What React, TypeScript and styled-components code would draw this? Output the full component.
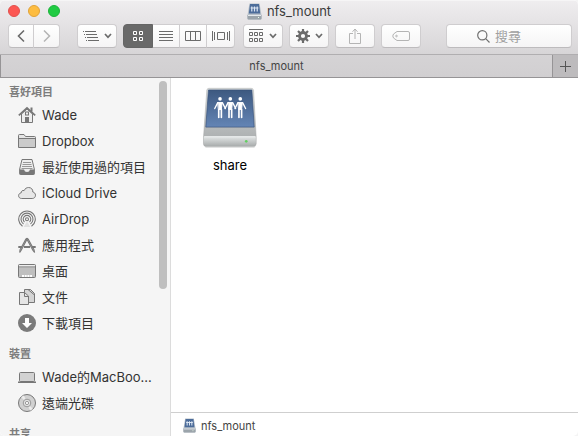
import React from "react";
import styled, { createGlobalStyle, css } from "styled-components";

const GlobalStyle = createGlobalStyle`
  * { box-sizing: border-box; }
  body {
    margin: 0;
    background: #f4f4f4;
    font-family: Inter, "Noto Sans CJK TC", sans-serif;
    font-size: 13px;
    color: #333;
  }
  button, input { font: inherit; color: inherit; }
  svg { display: block; flex: none; }
`;

const Window = styled.div`
  display: flex;
  flex-direction: column;
  height: 100vh;
  overflow: hidden;
  border-radius: 5px;
  background: #fff;
`;

const Chrome = styled.header`
  flex: none;
  height: 55px;
  background: linear-gradient(#efedef, #d7d5d7);
  border-top: 1px solid #f6f5f6;
  border-bottom: 1px solid #b0aeb0;
`;

const TitleBar = styled.div`
  display: grid;
  grid-template-columns: 1fr auto 1fr;
  align-items: center;
  height: 20px;
  padding: 0 8px;
`;

const Lights = styled.div`
  display: flex;
  gap: 8px;
`;

const Light = styled.button<{ $fill: string; $edge: string }>`
  width: 12px;
  height: 12px;
  padding: 0;
  border-radius: 50%;
  background: ${(p) => p.$fill};
  border: 1px solid ${(p) => p.$edge};
`;

const Title = styled.h1`
  display: flex;
  align-items: center;
  gap: 5px;
  margin: 0;
  font-size: 13px;
  font-weight: 400;
  line-height: 20px;
  color: #3c3c3c;
`;

const Toolbar = styled.div`
  display: flex;
  align-items: center;
  gap: 6px;
  padding: 3px 6px 0 8px;
`;

const Group = styled.div<{ $after: number }>`
  display: flex;
  margin-right: ${(p) => p.$after}px;
`;

const control = css`
  height: 24px;
  background: linear-gradient(#fff, #f5f4f5);
  border: 1px solid #cfcdcf;
  border-bottom-color: #bdbbbd;
  border-radius: 4px;
`;

const ToolButton = styled.button<{ $width: number; $active?: boolean; $join?: "start" | "middle" | "end" }>`
  ${control}
  display: flex;
  align-items: center;
  justify-content: center;
  gap: 5px;
  flex: none;
  width: ${(p) => p.$width}px;
  padding: 0;
  color: #6b6b6b;
  &:disabled { color: #b4b4b4; }
  ${(p) => p.$join === "start" && css`border-radius: 4px 0 0 4px;`}
  ${(p) => p.$join === "middle" && css`border-radius: 0; border-left-width: 0;`}
  ${(p) => p.$join === "end" && css`border-radius: 0 4px 4px 0; border-left-width: 0;`}
  ${(p) => p.$active && css`background: #696969; border-color: #656565; color: #fff;`}
`;

const Search = styled.label`
  ${control}
  display: flex;
  align-items: center;
  gap: 5px;
  width: 126px;
  margin-left: auto;
  padding-left: 30px;
  color: #707070;
`;

const SearchInput = styled.input`
  flex: 1;
  min-width: 0;
  height: 20px;
  padding: 0;
  border: 0;
  outline: 0;
  background: none;
  line-height: 20px;
  &::placeholder { color: #a0a0a0; opacity: 1; }
`;

const TabBar = styled.div`
  display: flex;
  flex: none;
  height: 23px;
  border-bottom: 1px solid #969496;
  border-left: 1px solid #969496;
`;

const Tab = styled.button`
  flex: 1;
  padding: 0;
  border: 0;
  background: linear-gradient(#d5d3d5, #d1cfd1);
  color: #444;
  font-size: 11px;
`;

const AddTab = styled.button`
  display: grid;
  place-items: center;
  width: 26px;
  padding: 0;
  border: 0;
  border-left: 1px solid #969496;
  background: #bdbbbd;
  color: #555;
`;

const Body = styled.div`
  display: flex;
  flex: 1;
  min-height: 0;
`;

const Sidebar = styled.nav`
  position: relative;
  flex: none;
  width: 171px;
  overflow: hidden;
  background: #f5f5f5;
  border-right: 1px solid #dcdcdc;
`;

const Section = styled.section`
  & + & { margin-top: 4px; }
`;

const SectionTitle = styled.h2`
  height: 24px;
  margin: 0;
  padding: 2px 0 0 9px;
  font-size: 11px;
  font-weight: 700;
  line-height: 24px;
  color: #7d7d7d;
`;

const List = styled.ul`
  margin: 0;
  padding: 0;
  list-style: none;
`;

const Place = styled.a`
  display: flex;
  align-items: center;
  gap: 6px;
  height: 26px;
  padding: 0 18px;
  line-height: 26px;
  color: #333;
  text-decoration: none;
  white-space: nowrap;
`;

const ScrollThumb = styled.div`
  position: absolute;
  top: 3px;
  right: 3px;
  width: 8px;
  height: 58%;
  border-radius: 4px;
  background: #bfbfbf;
`;

const Main = styled.main`
  display: flex;
  flex-direction: column;
  flex: 1;
  min-width: 0;
`;

const Files = styled.div`
  display: flex;
  flex-wrap: wrap;
  align-content: flex-start;
  flex: 1;
  padding-top: 9px;
`;

const FileItem = styled.a`
  display: flex;
  flex-direction: column;
  align-items: center;
  gap: 8px;
  width: 118px;
  line-height: 18px;
  color: #000;
  text-decoration: none;
`;

const PathBar = styled.footer`
  display: flex;
  align-items: center;
  gap: 5px;
  flex: none;
  height: 24px;
  padding: 2px 12px 0;
  border-top: 1px solid #cfcfcf;
  font-size: 11px;
  color: #444;
`;

const ShareDrive = () => (
  <svg width="56" height="61" viewBox="36 24 168 184" aria-hidden="true">
    <defs>
      <linearGradient id="shell" x2="0" y2="1"><stop stopColor="#d8dcdc" /><stop offset="1" stopColor="#a6a9aa" /></linearGradient>
      <linearGradient id="face" x2="0" y2="1"><stop stopColor="#e2e5e5" /><stop offset="1" stopColor="#a9adad" /></linearGradient>
      <linearGradient id="panel" x2="0" y2="1"><stop stopColor="#3d5980" /><stop offset="1" stopColor="#6485b5" /></linearGradient>
    </defs>
    <rect x="44" y="198" width="152" height="9" rx="4" fill="#d9dada" />
    <path d="M56 28H184Q190 28 191 34L199 176V195Q199 203 191 203H48Q40 203 40 195V176L50 34Q51 28 56 28Z" fill="url(#shell)" stroke="#a9adad" strokeWidth="1.5" />
    <path d="M55 33H186L193 145H47Z" fill="url(#panel)" stroke="#36517a" strokeWidth="2" />
    <path d="M41 174H198V193Q198 202 190 202H49Q41 202 41 193Z" fill="url(#face)" />
    <path d="M42 174H197" stroke="#f1f3f3" strokeWidth="3" />
    <circle cx="169" cy="188" r="4" fill="#63cf62" />
    {[90, 121, 151].map((x) => (
      <g key={x} fill="#fff" stroke="#fff" strokeLinecap="round" strokeLinejoin="round">
        <circle cx={x} cy="60" r="5.5" stroke="none" />
        <path d={`M${x - 6} 71H${x + 6}L${x + 4} 92H${x - 4}Z`} strokeWidth="3" />
        <path d={`M${x - 7} 71L${x - 16} 89M${x + 7} 71L${x + 16} 89`} strokeWidth="4" />
        <path d={`M${x - 4} 92V116M${x + 4} 92V116`} strokeWidth="5" />
      </g>
    ))}
  </svg>
);

const SmallDrive = ({ size }: { size: number }) => (
  <svg width={size} height={size + 2} viewBox="0 0 15 17" aria-hidden="true">
    <path d="M2.5.5H12.5L14.5 12V15.5Q14.5 16.5 13.5 16.5H1.5Q.5 16.5.5 15.5V12Z" fill="#b6bfc8" />
    <path d="M3 1H12L13.2 10.5H1.8Z" fill="#4c6c9a" />
    <path d="M4.8 3.5V8.5M7.5 3.5V8.5M10.2 3.5V8.5M3.6 5H11.4" stroke="#dce6f3" strokeWidth="1.2" />
    <path d="M.5 12H14.5V15.5Q14.5 16.5 13.5 16.5H1.5Q.5 16.5.5 15.5Z" fill="#9ba4ab" />
    <path d="M1 12.5H14" stroke="#e4e9ed" />
    <path d="M11 14.5h1" stroke="#eaffea" />
  </svg>
);

const Line = ({ w, h, children, width = 1 }: { w: number; h: number; width?: number; children: React.ReactNode }) => (
  <svg width={w} height={h} viewBox={`0 0 ${w} ${h}`} fill="none" stroke="currentColor" strokeWidth={width} aria-hidden="true">
    {children}
  </svg>
);

const Caret = () => <Line w={8} h={6} width={1.7}><path d="M1 1L4 4.3L7 1" /></Line>;

const gray = "#777";
const fillGray = "#cbcbcb";

const placeIcons: Record<string, React.ReactNode> = {
  home: (
    <>
      <path d="M3.5 8V16.5H14.5V8L9 3Z" fill="#eee" stroke={gray} />
      <path d="M.8 9.3L9 1.8L17.2 9.3" stroke={gray} strokeWidth="1.7" />
      <path d="M13.5 1.5V5.5" stroke={gray} strokeWidth="2" />
      <rect x="7.5" y="6" width="3" height="3" stroke={gray} />
      <path d="M7 11H11V17H7Z" fill={gray} />
    </>
  ),
  folder: (
    <>
      <path d="M.5 15.5V3.5Q.5 2.5 1.5 2.5H6L7.5 4.5H16.5Q17.5 4.5 17.5 5.5V15.5Z" fill="#e4e4e4" stroke={gray} />
      <path d="M1 7H17V15H1Z" fill={fillGray} />
      <path d="M1 6.5H17" stroke={gray} />
    </>
  ),
  recent: (
    <>
      <path d="M4 1.5H14L16.3 11V15.5Q16.3 16.5 15.3 16.5H2.7Q1.7 16.5 1.7 15.5V11Z" fill="#eee" stroke={gray} />
      <path d="M5 4.5H13M4.5 6.5H13.5M4 8.5H14M3.5 10.5H14.5" stroke="#999" />
      <path d="M1.5 11.5H6Q6.5 14 9 14T12 11.5H16.5V16.5H1.5Z" fill={gray} />
    </>
  ),
  cloud: <path d="M3.7 14.5C1.6 14.5.6 13.2.6 11.7C.6 10 1.9 9 3.1 9C2.9 7.2 4.6 6 6.1 6.6C7 4.5 8.7 3.5 10.6 3.5C13.2 3.5 15 5.4 14.8 8C16.4 8.3 17.5 9.6 17.5 11.2C17.5 13.2 16.1 14.5 14.2 14.5Z" fill="#e7e7e7" stroke={gray} />,
  airdrop: (
    <g stroke={gray} strokeWidth="1.1">
      <path d="M4.5 16.2A8.3 8.3 0 1 1 13.5 16.2" />
      <path d="M5.5 14A6 6 0 1 1 12.5 14" />
      <path d="M6.5 12A3.8 3.8 0 1 1 11.5 12" />
      <circle cx="9" cy="9.3" r="1.5" />
      <path d="M9 11.5L5.6 17H12.4Z" fill="#e0e0e0" stroke="none" />
    </g>
  ),
  apps: (
    <g stroke={gray}>
      <path d="M9.7 2L3.2 14.2L1.7 16.5L2 13.8L8 2.7" strokeWidth="1.1" />
      <path d="M8.2 2L15 14.5L16.6 16.5L16 13.8L10 2.7" strokeWidth="1.1" />
      <path d="M.3 11H4M6 11H12M14 11H17.7" strokeWidth="2" />
    </g>
  ),
  desktop: (
    <>
      <rect x=".5" y="2.5" width="17" height="13" rx="1" fill="#bfbfbf" stroke={gray} />
      <path d="M1 3.5H17" stroke="#eee" />
      <path d="M1 5H17" stroke="#999" />
      <path d="M4 14H14" stroke="#fff" strokeWidth="2" strokeDasharray="2 .7" />
    </>
  ),
  docs: (
    <>
      <path d="M6.5 1.5H12.5L16.5 5.5V14.5H6.5Z" fill="#d5d5d5" stroke={gray} />
      <path d="M10 1.5L16.5 7" stroke={gray} />
      <path d="M1.5 4.5H6.5L10.5 8V16.5H1.5Z" fill="#e5e5e5" stroke={gray} />
      <path d="M6.5 4.5V8.5H10.5" stroke={gray} />
    </>
  ),
  downloads: (
    <>
      <circle cx="9" cy="9" r="9" fill="#7b7b7b" />
      <path d="M7 4H11V9H14L9 14L4 9H7Z" fill="#fff" />
    </>
  ),
  laptop: (
    <>
      <rect x="1.5" y="4.5" width="15" height="9" rx="1" fill="#d2d2d2" stroke={gray} />
      <path d="M0 14.3H18" stroke={gray} strokeWidth="1.5" />
    </>
  ),
  disc: (
    <>
      <circle cx="9" cy="9" r="8.5" fill="#d0d0d0" stroke={gray} />
      <path d="M9 9L3 3L6 1.4ZM9 9L15 15L12 16.6Z" fill="#ececec" />
      <circle cx="9" cy="9" r="3.8" fill="#e2e2e2" stroke="#999" />
      <circle cx="9" cy="9" r="1.6" fill="#fff" stroke="#999" />
    </>
  ),
};

const sections = [
  {
    title: "喜好項目",
    places: [
      ["home", "Wade"],
      ["folder", "Dropbox"],
      ["recent", "最近使用過的項目"],
      ["cloud", "iCloud Drive"],
      ["airdrop", "AirDrop"],
      ["apps", "應用程式"],
      ["desktop", "桌面"],
      ["docs", "文件"],
      ["downloads", "下載項目"],
    ],
  },
  { title: "裝置", places: [["laptop", "Wade的MacBoo..."], ["disc", "遠端光碟"]] },
  { title: "共享", places: [] },
];

export default function App() {
  return (
    <Window>
      <GlobalStyle />
      <Chrome>
        <TitleBar>
          <Lights>
            <Light $fill="#fc5753" $edge="#e1504d" aria-label="Close" />
            <Light $fill="#fdbc40" $edge="#e0a238" aria-label="Minimize" />
            <Light $fill="#20cb43" $edge="#1cb33b" aria-label="Zoom" />
          </Lights>
          <Title><SmallDrive size={15} />nfs_mount</Title>
        </TitleBar>
        <Toolbar>
          <Group $after={11}>
            <ToolButton $width={26} $join="start" aria-label="Back">
              <Line w={8} h={14} width={1.6}><path d="M7 1.5L1.5 7L7 12.5" /></Line>
            </ToolButton>
            <ToolButton $width={26} $join="end" disabled aria-label="Forward">
              <Line w={8} h={14} width={1.5}><path d="M1 1.5L6.5 7L1 12.5" /></Line>
            </ToolButton>
          </Group>
          <ToolButton $width={40} aria-label="Outline">
            <Line w={16} h={12}><path d="M0 1.5H1M2 1.5H13M1 4.5H2M3 4.5H14M2 7.5H3M4 7.5H15M3 10.5H4M5 10.5H16" /></Line>
            <Caret />
          </ToolButton>
          <Group $after={2}>
            <ToolButton $width={30} $join="start" $active aria-label="Icon view" aria-pressed>
              <Line w={10} h={10}><path d="M.5.5H3.5V3.5H.5ZM6.5.5H9.5V3.5H6.5ZM.5 6.5H3.5V9.5H.5ZM6.5 6.5H9.5V9.5H6.5Z" /></Line>
            </ToolButton>
            <ToolButton $width={27} $join="middle" aria-label="List view">
              <Line w={14} h={10}><path d="M0 .5H14M0 3.5H14M0 6.5H14M0 9.5H14" /></Line>
            </ToolButton>
            <ToolButton $width={27} $join="middle" aria-label="Column view">
              <Line w={16} h={10}><path d="M.5.5H15.5V9.5H.5ZM5.5 0V10M10.5 0V10" /></Line>
            </ToolButton>
            <ToolButton $width={28} $join="end" aria-label="Gallery view">
              <Line w={18} h={10}><path d="M.5 0V10M2.5 1V9M5.5 1.5H12.5V8.5H5.5ZM15.5 1V9M17.5 0V10" /></Line>
            </ToolButton>
          </Group>
          <ToolButton $width={40} aria-label="Arrange">
            <Line w={15} h={14}><path d="M0 .5H14M.5 3.5H3.5V6.5H.5ZM5.5 3.5H8.5V6.5H5.5ZM10.5 3.5H13.5V6.5H10.5ZM.5 9.5H3.5V12.5H.5ZM5.5 9.5H8.5V12.5H5.5ZM10.5 9.5H13.5V12.5H10.5Z" /></Line>
            <Caret />
          </ToolButton>
          <ToolButton $width={40} aria-label="Actions">
            <Line w={14} h={14} width={2.8}>
              <circle cx="7" cy="7" r="3.5" />
              <path d="M7 0V3M7 11V14M0 7H3M11 7H14M2 2L4.2 4.2M9.8 9.8L12 12M2 12L4.2 9.8M9.8 4.2L12 2" strokeWidth="2.2" />
            </Line>
            <Caret />
          </ToolButton>
          <ToolButton $width={40} disabled aria-label="Share">
            <Line w={12} h={16}><path d="M4 5.5H.5V15.5H11.5V5.5H8M6 11V1M3.5 3.8L6 1L8.5 3.8" /></Line>
          </ToolButton>
          <ToolButton $width={40} disabled aria-label="Tags">
            <Line w={18} h={10}><path d="M5 .5H16Q17.5.5 17.5 2V8Q17.5 9.5 16 9.5H5L1.5 7Q0 5 1.5 3Z" /><circle cx="4.5" cy="5" r=".8" /></Line>
          </ToolButton>
          <Search>
            <Line w={13} h={13} width={1.2}><circle cx="5.3" cy="5.3" r="4.6" /><path d="M8.7 8.7L12.5 12.5" /></Line>
            <SearchInput type="search" placeholder="搜尋" aria-label="搜尋" />
          </Search>
        </Toolbar>
      </Chrome>
      <TabBar>
        <Tab>nfs_mount</Tab>
        <AddTab aria-label="New tab"><Line w={11} h={11}><path d="M5.5 0V11M0 5.5H11" /></Line></AddTab>
      </TabBar>
      <Body>
        <Sidebar>
          {sections.map((s) => (
            <Section key={s.title}>
              <SectionTitle>{s.title}</SectionTitle>
              <List>
                {s.places.map(([icon, name]) => (
                  <li key={name}>
                    <Place href="#">
                      <svg width="18" height="18" viewBox="0 0 18 18" fill="none" aria-hidden="true">{placeIcons[icon]}</svg>
                      {name}
                    </Place>
                  </li>
                ))}
              </List>
            </Section>
          ))}
          <ScrollThumb />
        </Sidebar>
        <Main>
          <Files>
            <FileItem href="#"><ShareDrive />share</FileItem>
          </Files>
          <PathBar><SmallDrive size={13} />nfs_mount</PathBar>
        </Main>
      </Body>
    </Window>
  );
}
